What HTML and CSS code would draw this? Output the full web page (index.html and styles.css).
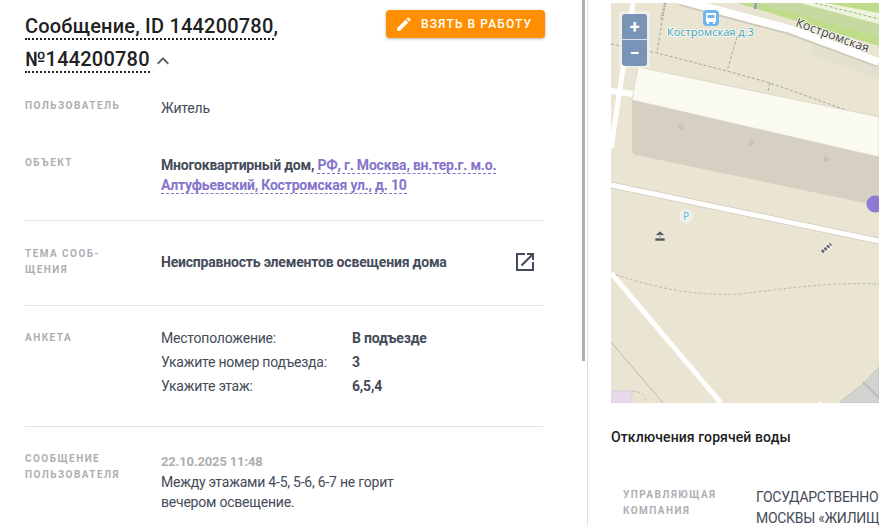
FILE: index.html
```html
<!DOCTYPE html>
<html lang="ru">
<head>
<meta charset="utf-8">
<title>Сообщение</title>
<link rel="stylesheet" href="styles.css">
</head>
<body>
<div class="page">
  <main class="left">
    <header class="head">
      <h1 class="title"><span class="dotted">Сообщение, ID 144200780</span>, <span class="dotted">№144200780</span><svg class="chev" width="24" height="24" viewBox="0 0 24 24"><path d="M7.41 15.41 12 10.83l4.59 4.58L18 14l-6-6-6 6z" fill="#5f6368"/></svg></h1>
      <button class="take" type="button"><svg width="18" height="18" viewBox="0 0 24 24"><path d="M3 17.25V21h3.75L17.81 9.94l-3.75-3.75L3 17.25zM20.71 7.04a1 1 0 0 0 0-1.41l-2.34-2.34a1 1 0 0 0-1.41 0l-1.83 1.83 3.75 3.75 1.83-1.83z" fill="#fff"/></svg><span>ВЗЯТЬ В РАБОТУ</span></button>
    </header>

    <section class="row row-user">
      <div class="label">ПОЛЬЗОВАТЕЛЬ</div>
      <div class="value">Житель</div>
    </section>
    <section class="row row-object line">
      <div class="label">ОБЪЕКТ</div>
      <div class="value"><b>Многоквартирный дом, </b><a class="link">РФ, г. Москва, вн.тер.г. м.о.<br>Алтуфьевский, Костромская ул., д. 10</a></div>
    </section>
    <section class="row row-theme line">
      <div class="label">ТЕМА СООБ-<br>ЩЕНИЯ</div>
      <div class="value theme"><b>Неисправность элементов освещения дома</b><svg class="open" width="24" height="24" viewBox="0 0 24 24"><path d="M19 19H5V5h7V3H3v18h18v-9h-2v7zM14 3v2h3.59l-9.83 9.83 1.41 1.41L19 6.41V10h2V3h-7z" fill="#444b59"/></svg></div>
    </section>
    <section class="row row-form line">
      <div class="label">АНКЕТА</div>
      <div class="qa">
        <span>Местоположение:</span><b>В подъезде</b>
        <span>Укажите номер подъезда:</span><b>3</b>
        <span>Укажите этаж:</span><b>6,5,4</b>
      </div>
    </section>
    <section class="row row-msg">
      <div class="label">СООБЩЕНИЕ<br>ПОЛЬЗОВАТЕЛЯ</div>
      <div class="value msg"><b class="date">22.10.2025 11:48</b><br>Между этажами 4-5, 5-6, 6-7 не горит<br>вечером освещение.</div>
    </section>
    <div class="scrollbar"></div>
  </main>

  <aside class="right">
    <div class="map">
      <svg class="map-svg" width="268" height="400" viewBox="611 3 268 400">
        <rect x="611" y="3" width="268" height="400" fill="#e9e5d2"/>
        <polygon points="737,3 879,46 879,3" fill="#bfdc8b"/>
        <polygon points="756,3 879,37 879,24 800,3" fill="#c5d9a0"/>
        <polygon points="800,3 879,24 879,13 825,3" fill="#f0f3dc"/>
        <path d="M815,3 L879,19" stroke="#7fc07f" stroke-width="1" stroke-dasharray="3 2" fill="none"/>
        <path d="M756,3 L755,9" stroke="#8d8ac8" stroke-width="2" fill="none"/>
        <polyline points="680,1 790,30 879,63" fill="none" stroke="#d0ccbc" stroke-width="10"/>
        <polyline points="680,0 790,29 879,62" fill="none" stroke="#fff" stroke-width="8"/>
        <polygon points="812,45 879,68 879,79 810,54" fill="#e3e0cf"/>
        <g fill="none" stroke="#a8a698" stroke-width="1" stroke-dasharray="3 2">
          <path d="M611,44 L657,53 L727,71 L770,83 L846,110"/>
          <path d="M665,3 L657,53"/>
          <path d="M737,37 L727,71"/>
          <path d="M770,83 L768,91"/>
          <path d="M611,273 C660,290 700,296 740,294 C790,288 830,282 879,284" stroke="#bdbaa8"/>
          <path d="M632,391 C645,392 646,398 646,403" stroke="#bdbaa8"/>
        </g>
        <path d="M665,3 L661,20" stroke="#a8a698" stroke-width="3" stroke-dasharray="1 2"/>
        <path d="M633,3 L611,148" stroke="#fff" stroke-width="5"/>
        <path d="M611,91 L634,94" stroke="#fff" stroke-width="6"/>
        <polygon points="638,67 632,100 879,157 879,117" fill="#fbfaf1" stroke="#c9c6b6" stroke-width="0.5"/>
        <path d="M632,100 L879,157 L879,206 L636,155 Q632,154 632,150 Z" fill="#d5d0c1"/>
        <g fill="#c7c3b3"><circle cx="681" cy="127" r="2.5"/><circle cx="751" cy="143" r="2.5"/><circle cx="826" cy="159" r="2.5"/></g>
        <path d="M611,185 L879,241" stroke="#cfcbbc" stroke-width="6.5"/>
        <path d="M611,185 L879,241" stroke="#fff" stroke-width="5"/>
        <path d="M611,273 L721,403" stroke="#fff" stroke-width="5"/>
        <path d="M611,342 L663,403" stroke="#bcb9ab" stroke-width="1" fill="none"/>
        <rect x="611" y="391" width="21" height="12" fill="#e8d9ea" stroke="#d3c3d3" stroke-width="0.6"/>
        <polygon points="841,403 841,401 863,384 879,367 879,403" fill="#d2d2d0" stroke="#bdbdbb" stroke-width="0.8"/>
        <path d="M863,382 L879,398" stroke="#bdbdbb" stroke-width="2"/>
        <circle cx="820" cy="403" r="1.5" fill="#fff"/>
        <rect x="703" y="10" width="16" height="16" rx="4" fill="#6db7ee"/>
        <path d="M706,13 h10 v9 h-1 v2 h-2 v-2 h-4 v2 h-2 v-2 h-1 z" fill="#fff"/>
        <rect x="707.5" y="15" width="7" height="3" fill="#6db7ee"/>
        <text class="m-stop" x="667" y="36">Костромская д.3</text>
        <text class="m-road" transform="translate(795 26) rotate(20)">Костромская</text>
        <circle cx="686" cy="216" r="7" fill="#f1f0e8"/>
        <text class="m-p" x="683" y="220">P</text>
        <path d="M660,231 l5,4.5 h-10 z M659.2,235 h1.6 v3 h-1.6 z M655,238 h10 v3 h-10 z" fill="#555" stroke="#fff" stroke-width=".5"/>
        <path d="M822,252 L831,244" stroke="#fff" stroke-width="5"/>
        <path d="M822,252 L831,244" stroke="#666" stroke-width="3.4" stroke-dasharray="2.5 1"/>
        <circle cx="875" cy="204" r="8.5" fill="#8d7ad2"/>
      </svg>
      <div class="zoom">
        <div class="zoom-btn">+</div>
        <div class="zoom-btn">−</div>
      </div>
    </div>
    <h2 class="r-title">Отключения горячей воды</h2>
    <section class="r-row">
      <div class="label">УПРАВЛЯЮЩАЯ<br>КОМПАНИЯ</div>
      <div class="r-value">ГОСУДАРСТВЕННОЕ<br>МОСКВЫ «ЖИЛИЩНИК</div>
    </section>
  </aside>
</div>
</body>
</html>
```
FILE: styles.css
```css
* { box-sizing: border-box; }
html, body { margin: 0; height: 525px; overflow: hidden; background: #fff; }
body { font-family: Roboto, "Liberation Sans", sans-serif; font-size: 14px; letter-spacing: -.22px; color: #444b59; }
.page { display: flex; width: 879px; height: 525px; overflow: hidden; }
.left { position: relative; flex: 0 0 588px; height: 525px; border-right: 1px solid #dedede; padding: 0 44px 0 25px; overflow: hidden; }
.scrollbar { position: absolute; top: 0; right: 2px; width: 3px; height: 361px; background: #aeaeb2; }
.head { display: flex; justify-content: space-between; align-items: flex-start; height: 89px; padding-top: 10px; }
.title { margin: 0; width: 300px; font-size: 20px; font-weight: 500; line-height: 33px; letter-spacing: .2px; color: #212121; }
.dotted { border-bottom: 2px dotted #212121; }
.chev { vertical-align: -7px; margin-left: 1px; }
.take { display: flex; align-items: center; gap: 8px; flex: none; width: 159px; height: 28px; margin-right: -2px; padding: 0 0 0 9px; border: 0; border-radius: 4px; background: #ff8f00; color: #fff; font: 500 12px/28px Roboto, sans-serif; letter-spacing: 1.1px; box-shadow: 0 1px 3px rgba(0,0,0,.3); }
.row { display: grid; grid-template-columns: 136px 1fr; }
.label { font-size: 10px; font-weight: 700; letter-spacing: 1.45px; line-height: 16px; color: #aeaeb2; }
.value { line-height: 20px; }
.value b, .qa b { font-weight: 700; letter-spacing: -.2px; }
.row-user { height: 57px; padding-top: 9px; }
.row-object { height: 75px; padding-top: 9px; }
.row-object .value { font-weight: 700; letter-spacing: -.2px; }
.line { border-bottom: 1px solid #e2e2e2; }
.link { color: #8674cb; border-bottom: 1px dashed #8674cb; }
.row-theme { height: 85px; padding-top: 25px; }
.theme { display: flex; justify-content: space-between; padding-right: 6px; margin-top: 6px; }
.open { margin-top: -2px; }
.row-form { height: 121px; padding-top: 20px; }
.row-form .label { margin-top: 4px; }
.qa { display: grid; grid-template-columns: 191px 1fr; grid-auto-rows: 24px; line-height: 24px; }
.row-msg { padding-top: 24px; }
.value .date { color: #aeaeb2; font-weight: 700; font-size: 13px; letter-spacing: -.15px; }
.right { flex: 1; min-width: 0; padding: 3px 0 0 23px; }
.map { position: relative; width: 268px; height: 400px; overflow: hidden; }
.map-svg { display: block; }
.m-stop { font: 11px "Open Sans", sans-serif; letter-spacing: 0; fill: #3ea6c2; stroke: #fff; stroke-width: 2px; paint-order: stroke; stroke-opacity: .6; }
.m-road { font: 12.4px "Open Sans", sans-serif; letter-spacing: 0; fill: #444; stroke: #fff; stroke-width: 2px; paint-order: stroke; stroke-opacity: .6; }
.m-p { font: 10px "Open Sans", sans-serif; fill: #5db5ee; }
.zoom { position: absolute; left: 8px; top: 8px; width: 31px; height: 57px; padding: 3px; border-radius: 4px; background: rgba(255,255,255,.4); }
.zoom-btn { height: 26px; background: #7895b8; color: #fff; font: 700 18px/25px Roboto, sans-serif; text-align: center; }
.zoom-btn:first-child { border-radius: 3px 3px 0 0; border-bottom: 1px solid rgba(255,255,255,.7); }
.zoom-btn:last-child { border-radius: 0 0 3px 3px; }
.r-title { margin: 26px 0 0; font-size: 14px; font-weight: 500; line-height: 16px; letter-spacing: .1px; color: #212121; }
.r-row { display: grid; grid-template-columns: 133px 123px; padding: 42px 0 0 12px; overflow: hidden; width: 268px; }
.r-value { line-height: 21px; white-space: nowrap; overflow: hidden; letter-spacing: -.3px; }
```
